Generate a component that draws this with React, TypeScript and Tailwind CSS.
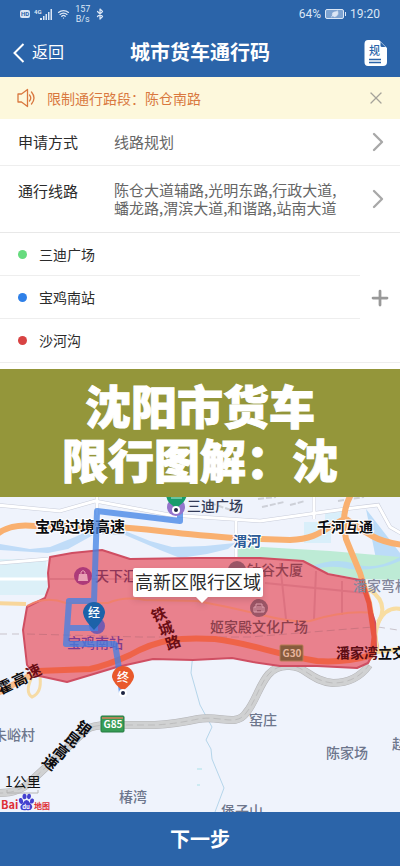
import { Bluetooth, ChevronRight, Leaf, Plus, Wifi, X } from 'lucide-react';

const stops = [
  { name: '三迪广场', dot: 'bg-[#66db7e]' },
  { name: '宝鸡南站', dot: 'bg-[#2f80e8]' },
  { name: '沙河沟', dot: 'bg-[#d84343]' },
];

interface Place {
  text: string;
  x: number;
  y: number;
  fill: string;
  bold?: boolean;
  halo?: boolean;
}

const places: Place[] = [
  { text: '三迪广场', x: 187, y: 14, fill: '#333b58' },
  { text: '宝鸡过境高速', x: 35, y: 35, fill: '#0c0c10', bold: true, halo: true },
  { text: '千河互通', x: 317, y: 35, fill: '#0c0c10', bold: true, halo: true },
  { text: '渭河', x: 233, y: 49, fill: '#2c5c98', bold: true, halo: true },
  { text: '窑庄', x: 249, y: 228, fill: '#6d768c' },
  { text: '陈家场', x: 326, y: 261, fill: '#6d768c' },
  { text: '赵', x: 392, y: 252, fill: '#6d768c' },
  { text: '朱峪村', x: -7, y: 243, fill: '#6d768c' },
  { text: '椿湾', x: 119, y: 305, fill: '#6d768c' },
  { text: '堡子山', x: 221, y: 319, fill: '#6d768c' },
];

const zonePlaces: Place[] = [
  { text: '天下汇', x: 95, y: 84, fill: '#8e3558' },
  { text: '钛谷大厦', x: 247, y: 78, fill: '#93404f' },
  { text: '潘家弯村', x: 353, y: 94, fill: '#83869b' },
  { text: '宝鸡南站', x: 67, y: 151, fill: '#813a8e' },
  { text: '姬家殿文化广场', x: 210, y: 135, fill: '#8c3f4c' },
  { text: '潘家湾', x: 336, y: 161, fill: '#5d0d14', bold: true },
  { text: '立交', x: 378, y: 161, fill: '#0c0c10', bold: true },
];

// Road names that follow the road, one glyph at a time
const roadGlyphs = [
  { text: '霍', x: 5, y: 190, angle: -25, fill: '#0c0c10' },
  { text: '高', x: 20, y: 183, angle: -25, fill: '#0c0c10' },
  { text: '速', x: 34, y: 175, angle: -25, fill: '#6b0d14' },
  { text: '铁', x: 159, y: 118, angle: -20, fill: '#6b0d14' },
  { text: '城', x: 166, y: 132, angle: -20, fill: '#6b0d14' },
  { text: '路', x: 173, y: 146, angle: -20, fill: '#6b0d14' },
  { text: '银', x: 83, y: 232, angle: 38, fill: '#0c0c10' },
  { text: '昆', x: 72, y: 243, angle: 38, fill: '#0c0c10' },
  { text: '高', x: 61, y: 255, angle: 38, fill: '#0c0c10' },
  { text: '速', x: 50, y: 266, angle: 38, fill: '#0c0c10' },
];

const zonePath =
  'M50 60 L72 56 L102 53 L130 62 L197 61 L260 61 L303 64 L328 77 L360 83 L368 103 L375 125 L376 150 L368 166 L357 171 L317 169 L280 169 L253 165 L232 161 L193 163 L153 162 L117 170 L67 185 L35 178 L27 168 L23 133 L27 110 L45 101 L49 90 L48 76 Z';

const expresswayPath =
  'M-4 296 Q18 297 30 285 L86 233 Q92 228 110 228 H155 Q175 227 198 222 C220 218 236 230 246 216 C260 200 262 168 288 169 C305 168 310 184 333 186 Q356 186 369 168';

function PlaceLabel({ place }: { place: Place }) {
  return (
    <text
      x={place.x}
      y={place.y}
      fill={place.fill}
      fontSize={place.text.length === 6 ? 15 : 14}
      fontWeight={place.bold ? 700 : 500}
      stroke={place.halo ? '#ffffff' : 'none'}
      strokeWidth={place.halo ? 2 : 0}
      paintOrder="stroke"
    >
      {place.text}
    </text>
  );
}

function StatusBar() {
  return (
    <div className="flex h-7 items-center justify-between px-5 text-[#dbe6f5]">
      <div className="flex items-center gap-1">
        <span className="rounded-xs bg-[#dbe6f5] px-px text-[6px] leading-2 font-bold text-[#2b64a9]">HD</span>
        <svg viewBox="0 0 19 13" className="h-[13px] w-[19px]" fill="currentColor">
          <text x="0" y="6" fontSize="6" fontWeight="700">4G</text>
          <rect x="6" y="10" width="2" height="2" />
          <rect x="9" y="8" width="1.5" height="4" />
          <rect x="11.5" y="6" width="1.5" height="6" />
          <rect x="14" y="4" width="1.5" height="8" />
          <rect x="16.5" y="1" width="1.5" height="11" />
        </svg>
        <Wifi className="h-3 w-[13px]" strokeWidth={2.5} />
        <span className="ml-px text-center text-[9px] leading-[10px]">
          157
          <br />
          B/s
        </span>
        <Bluetooth className="h-3.5 w-3" strokeWidth={2.5} />
      </div>
      <div className="flex items-center gap-1 text-[12px] leading-4">
        <span>64%</span>
        <span className="flex items-center gap-px">
          <span className="flex h-[10px] w-[19px] items-center justify-center rounded-xs border border-[#dbe6f5] bg-[#7da2d0]">
            <Leaf className="h-2 w-2" fill="currentColor" />
          </span>
          <span className="h-1 w-px bg-[#dbe6f5]" />
        </span>
        <span>19:20</span>
      </div>
    </div>
  );
}

function Header() {
  return (
    <header className="bg-[#2b64a9] font-[Roboto,'Noto_Sans_CJK_SC',sans-serif]">
      <StatusBar />
      <div className="grid h-[49px] grid-cols-[1fr_auto_1fr] items-center px-3 text-white">
        <button type="button" className="flex items-center justify-self-start text-[16px] leading-6">
          <svg viewBox="0 0 20 20" className="h-5 w-5" fill="none" stroke="currentColor" strokeWidth="2">
            <path d="M11.500 1 L2.500 10 L11.500 19" />
          </svg>
          返回
        </button>
        <h1 className="text-[20px] leading-7 font-bold">城市货车通行码</h1>
        <button type="button" aria-label="通行规定" className="justify-self-end">
          <svg viewBox="0 0 24 26" className="h-[26px] w-6">
            <path d="M4 0 H15 L23 8 V22 Q23 26 19 26 H4 Q0.500 26 0.500 22 V4 Q0.500 0 4 0 Z" fill="#ffffff" />
            <path d="M16.500 2 V5.500 Q16.500 7 18 7 H21.500 Z" fill="#2b64a9" />
            <text x="5" y="15" fontSize="11" fontWeight="500" fill="#2b64a9">规</text>
            <path d="M5 19.500 H17 M5 22.500 H17" stroke="#2b64a9" strokeWidth="1.400" />
          </svg>
        </button>
      </div>
    </header>
  );
}

function Notice() {
  return (
    <div className="flex h-[42px] items-center bg-[#fdf8dc] pr-3.5 pl-[17px] text-[#d9783f]">
      <svg viewBox="0 0 20 20" className="mr-2.5 h-5 w-5" fill="none" stroke="currentColor" strokeWidth="1.300">
        <path d="M1 6 H4.500 L10.500 1.500 V18.500 L4.500 14 H1 Z" strokeLinejoin="round" />
        <path d="M12.500 7 Q15 10 12.500 13 M14.500 4 Q19.500 10 14.500 16" strokeLinecap="round" />
      </svg>
      <p className="flex-1 text-[14px] leading-5">限制通行路段：陈仓南路</p>
      <button type="button" aria-label="关闭" className="text-[#a5a39a]">
        <X className="h-5 w-5" strokeWidth={1.5} />
      </button>
    </div>
  );
}

function FormRows() {
  return (
    <>
      <button type="button" className="flex h-[47px] w-full items-center border-b border-[#eeeeee] pr-1.5 pl-[18px] text-left text-[15px]">
        <span className="w-24 text-[#2b2b2b]">申请方式</span>
        <span className="flex-1 text-[#666666]">线路规划</span>
        <ChevronRight className="h-8 w-8 text-[#a8a8a8]" strokeWidth={1.75} />
      </button>
      <button type="button" className="flex h-[67px] w-full items-center border-b border-[#e8e8e8] pr-1.5 pl-[18px] text-left text-[15px] leading-[18px]">
        <span className="w-24 self-start pt-4 text-[#2b2b2b]">通行线路</span>
        <span className="flex-1 pr-4 text-[#666666]">陈仓大道辅路,光明东路,行政大道,蟠龙路,渭滨大道,和谐路,站南大道</span>
        <ChevronRight className="h-8 w-8 text-[#a8a8a8]" strokeWidth={1.75} />
      </button>
    </>
  );
}

function Stops() {
  return (
    <div className="flex items-stretch border-b border-[#eeeeee]">
      <ul className="flex-1 divide-y divide-[#eeeeee]">
        {stops.map((stop) => (
          <li key={stop.name} className="flex h-[43px] items-center gap-3 pl-[18px] text-[14px] text-[#2b2b2b]">
            <span className={`h-[9px] w-[9px] rounded-full ${stop.dot}`} />
            {stop.name}
          </li>
        ))}
      </ul>
      <button type="button" aria-label="添加途经点" className="flex w-10 items-center justify-center text-[#999999]">
        <Plus className="h-6 w-6" strokeWidth={2.75} />
      </button>
    </div>
  );
}

function RouteMap() {
  return (
    <svg
      viewBox="0 0 400 315"
      preserveAspectRatio="xMidYMid slice"
      className="block min-h-[300px] w-full flex-1 bg-[#eff3fc]"
      role="img"
      aria-label="高新区限行区域"
    >
      {/* Water and parkland */}
      <path d="M0 62 L46 62 L48 98 L0 98 Z" fill="#dcf0f8" />
      <path d="M304 25 H331 V46 H304 Z M325 14 H343 V30 H325 Z" fill="#d9effa" />
      <path d="M366 12 L400 56 V76 L376 62 Z" fill="#bcdcf8" />
      <path d="M238 48 L262 50 L330 54 L400 60 V83 L360 82 L328 76 L300 63 L238 60 Z" fill="#bdebd5" />
      <path d="M310 70 Q335 60 355 67 T400 60 V64 Q375 75 350 72 Q330 67 312 73 Z" fill="#b3dcf3" />
      <path d="M0 47 L30 52 L50 50 L75 40 L92 32 L125 34 L150 44 L172 50 L205 49 L235 46 L228 52 L207 57 L180 61 L160 53 L125 38 L95 37 L68 52 L48 56 L0 53 Z" fill="#c0dcf8" />

      {/* Side streets */}
      <g fill="none" stroke="#c9cdda" strokeWidth="4">
        <path d="M-4 8 L60 14 L95 4 L170 18 L260 24 L345 12 L378 8 L390 30 L404 38" />
        <path d="M97 0 V18 M236 24 V62 M314 0 V22 M0 66 L48 62" />
      </g>
      <g fill="none" stroke="#ffffff" strokeWidth="3">
        <path d="M-4 8 L60 14 L95 4 L170 18 L260 24 L345 12 L378 8 L390 30 L404 38" />
        <path d="M97 0 V18 M236 24 V62 M314 0 V22 M0 66 L48 62 M0 82 H50" />
      </g>
      <path d="M258 2 l18 -2 M262 10 l22 -5 M290 8 l15 -4 M210 6 l30 10 M338 4 l26 -4" stroke="#cdd0d8" strokeWidth="2" strokeDasharray="6 2" />
      <path d="M0 137 L22 137 M378 130 L404 134" stroke="#c9c3cb" strokeWidth="1" strokeDasharray="7 5" />

      {/* Stream */}
      <path d="M180 143 L193 156 L191 176 L200 208 L212 230 L206 243 L211 252 L212 262 L224 291 L215 315" fill="none" stroke="#b5d5ea" strokeWidth="1" />
      <path d="M197 272 h5 M197 288 h3" stroke="#cdeaf2" strokeWidth="2" />

      {/* Expressway under construction */}
      <path d={expresswayPath} fill="none" stroke="#b4b4b7" strokeWidth="8" />
      <path d={expresswayPath} fill="none" stroke="#d0d1d2" strokeWidth="7" />
      <path d={expresswayPath} fill="none" stroke="#bdbdbe" strokeWidth="1" strokeDasharray="7 4" />

      {/* Highways */}
      <g fill="none" stroke="#f9b070" strokeWidth="6">
        <path d="M-4 38 Q10 26 35 29 L100 29 Q135 31 160 34 T233 41 L290 43 C320 42 325 30 345 22" />
        <path d="M352 -4 Q340 15 346 42 L360 76 L369 106 L376 150 L366 165" />
        <path d="M346 22 Q357 30 372 39 Q385 46 404 48" />
      </g>
      <path d="M-4 197 L38 174" stroke="#f9bd8c" strokeWidth="6" />
      <path d="M33 178 Q24 195 32 200 Q42 196 40 180" fill="none" stroke="#f6dba5" strokeWidth="3" />
      <path d="M369 92 Q388 105 380 122 T378 155 L404 151" fill="none" stroke="#f8dda1" strokeWidth="4" />
      <path d="M378 125 Q388 107 404 113" fill="none" stroke="#f8dda1" strokeWidth="4" />
      <path d="M-4 106 L26 107" fill="none" stroke="#f8d69b" strokeWidth="4" />

      {places.map((place) => (
        <PlaceLabel key={place.text} place={place} />
      ))}

      {/* Restricted zone */}
      <path d={zonePath} fill="#e9818d" stroke="#cf4e62" strokeWidth="2" strokeLinejoin="round" />
      <path d="M50 82 H135 M265 86 L365 96 M280 66 L286 122 M316 74 L314 122 M342 84 V118" fill="none" stroke="#dc7280" strokeWidth="2" />
      <path d="M27 137 L140 140 L250 140 L373 130" fill="none" stroke="#cd7480" strokeWidth="1" strokeDasharray="8 4" />
      <path d="M27 109 Q45 98 66 106 L108 106 Q124 99 145 103 L197 104 Q230 110 262 118 T310 124 Q345 113 373 116" fill="none" stroke="#f0806c" strokeWidth="2" />
      <path d="M38 174 L90 172 Q108 168 130 158 C158 142 180 140 215 142 C250 146 270 156 317 164 Q345 166 372 158" fill="none" stroke="#ef6348" strokeWidth="6" />
      <path d="M361 82 L369 106 L374 140 L372 158" fill="none" stroke="#e95540" strokeWidth="5" />

      {/* Points of interest */}
      <circle cx="83" cy="79" r="9" fill="#ad3a79" />
      <path d="M79 77 H87 L88 84 H78 Z" fill="#e9a0b5" />
      <path d="M81 78 V75 Q83 72 85 75 V78" fill="none" stroke="#e9a0b5" strokeWidth="1" />
      <circle cx="237" cy="73" r="9" fill="#9b5566" />
      <circle cx="259" cy="111" r="9" fill="#9b5566" />
      <path d="M256 115 V107 H262 V115 M254 115 H264 M254 115 V110 H256 M262 110 H264 V115 M258 109 V113 M260 109 V113" fill="none" stroke="#dfa0ad" strokeWidth="1" />
      <circle cx="97" cy="129" r="8" fill="#735bb0" />

      {zonePlaces.map((place) => (
        <PlaceLabel key={place.text} place={place} />
      ))}
      {roadGlyphs.map((glyph) => (
        <text
          key={`${glyph.text}-${glyph.x}`}
          x={glyph.x}
          y={glyph.y + 5}
          transform={`rotate(${glyph.angle} ${glyph.x} ${glyph.y})`}
          textAnchor="middle"
          fontSize="15"
          fontWeight="700"
          fill={glyph.fill}
        >
          {glyph.text}
        </text>
      ))}

      {/* Planned route */}
      <path d="M180 8 V24 L97 14 L94 104 H69 L66 147 H115 L118 165 L122 196 M66 131 H98" fill="none" stroke="#3f82e6" strokeOpacity="0.75" strokeWidth="6" strokeLinejoin="round" />

      {/* Road shields */}
      <rect x="280" y="148" width="23" height="16" rx="1" fill="#875b3d" stroke="#b77c52" />
      <text x="292" y="160" textAnchor="middle" fontSize="10" fontWeight="700" fill="#e7b49b">G30</text>
      <rect x="101" y="219" width="23" height="16" rx="1" fill="#379c55" stroke="#247a40" />
      <path d="M102 221 H123" stroke="#b08759" strokeWidth="2" />
      <text x="113" y="231" textAnchor="middle" fontSize="10" fontWeight="700" fill="#ffffff">G85</text>

      {/* Start, via and end pins */}
      <circle cx="176" cy="10" r="9" fill="#9575cd" />
      <path d="M166 -2 H187 Q185 5 180 8 L176 12 L172 8 Q167 5 166 -2 Z" fill="#189c6b" />
      <path d="M171 1 H182" stroke="#b8ead5" strokeWidth="1" />
      <circle cx="176" cy="13" r="4" fill="#ffffff" />
      <circle cx="176" cy="13" r="2" fill="#1d2440" />

      <path d="M83 116 A11 11 0 1 1 105 116 Q104 123 94 133 Q84 123 83 116 Z" fill="#1c62a9" />
      <text x="94" y="120" textAnchor="middle" fontSize="12" fontWeight="500" fill="#ffffff">经</text>

      <path d="M112 180 A11 11 0 1 1 134 180 Q133 186 123 194 Q113 186 112 180 Z" fill="#e9592b" />
      <circle cx="123" cy="196" r="4" fill="#ffffff" />
      <circle cx="123" cy="196" r="2" fill="#1d2440" />
      <text x="123" y="185" textAnchor="middle" fontSize="12" fontWeight="500" fill="#ffffff">终</text>

      {/* Zone callout */}
      <g className="drop-shadow-md">
        <path d="M135 71 H261 Q263 71 263 73 V98 Q263 100 261 100 H208 L202 106 L196 100 H135 Q133 100 133 98 V73 Q133 71 135 71 Z" fill="#ffffff" />
      </g>
      <text x="198" y="92" textAnchor="middle" fontSize="18" fill="#2b2b2b">高新区限行区域</text>

      {/* Scale and provider mark */}
      <text x="5" y="290" fontSize="14" fill="#111111">1公里</text>
      <path d="M7 293 V296 H38 V293" fill="none" stroke="#b4b4b4" strokeWidth="1" />
      <text x="1" y="312" fontSize="11" fontWeight="700" fill="#de2f36">Bai</text>
      <g fill="#4440cf">
        <ellipse cx="21" cy="304" rx="2" ry="3" transform="rotate(-15 21 304)" />
        <ellipse cx="24.500" cy="299.500" rx="2" ry="2.800" />
        <ellipse cx="29" cy="299.500" rx="2" ry="2.800" transform="rotate(10 29 299.500)" />
        <ellipse cx="32" cy="304" rx="2" ry="2.600" transform="rotate(15 32 304)" />
        <path d="M26.500 303 Q28.500 303 30 306 Q33 309 32 311 Q31 314 26.500 313 Q21 314 20.500 311 Q20 308.500 23 306 Q24.500 303 26.500 303 Z" />
      </g>
      <text x="26" y="312" textAnchor="middle" fontSize="6" fontWeight="700" fill="#ffffff">du</text>
      <text x="34" y="312" fontSize="8" fontWeight="700" fill="#de2f36">地图</text>
    </svg>
  );
}

export default function App() {
  return (
    <div className="flex min-h-screen flex-col bg-white font-['Noto_Sans_CJK_SC',sans-serif]">
      <Header />
      <Notice />
      <FormRows />
      <Stops />
      <h2 className="mt-[6px] bg-[#94963a] pt-2 pb-3 text-center text-[46px] leading-[54px] font-black text-white [-webkit-text-stroke:1px_white]">
        沈阳市货车
        <br />
        限行图解：沈
      </h2>
      <RouteMap />
      <button type="button" className="h-[54px] w-full bg-[#2b64a9] text-[20px] font-bold text-white">
        下一步
      </button>
    </div>
  );
}
